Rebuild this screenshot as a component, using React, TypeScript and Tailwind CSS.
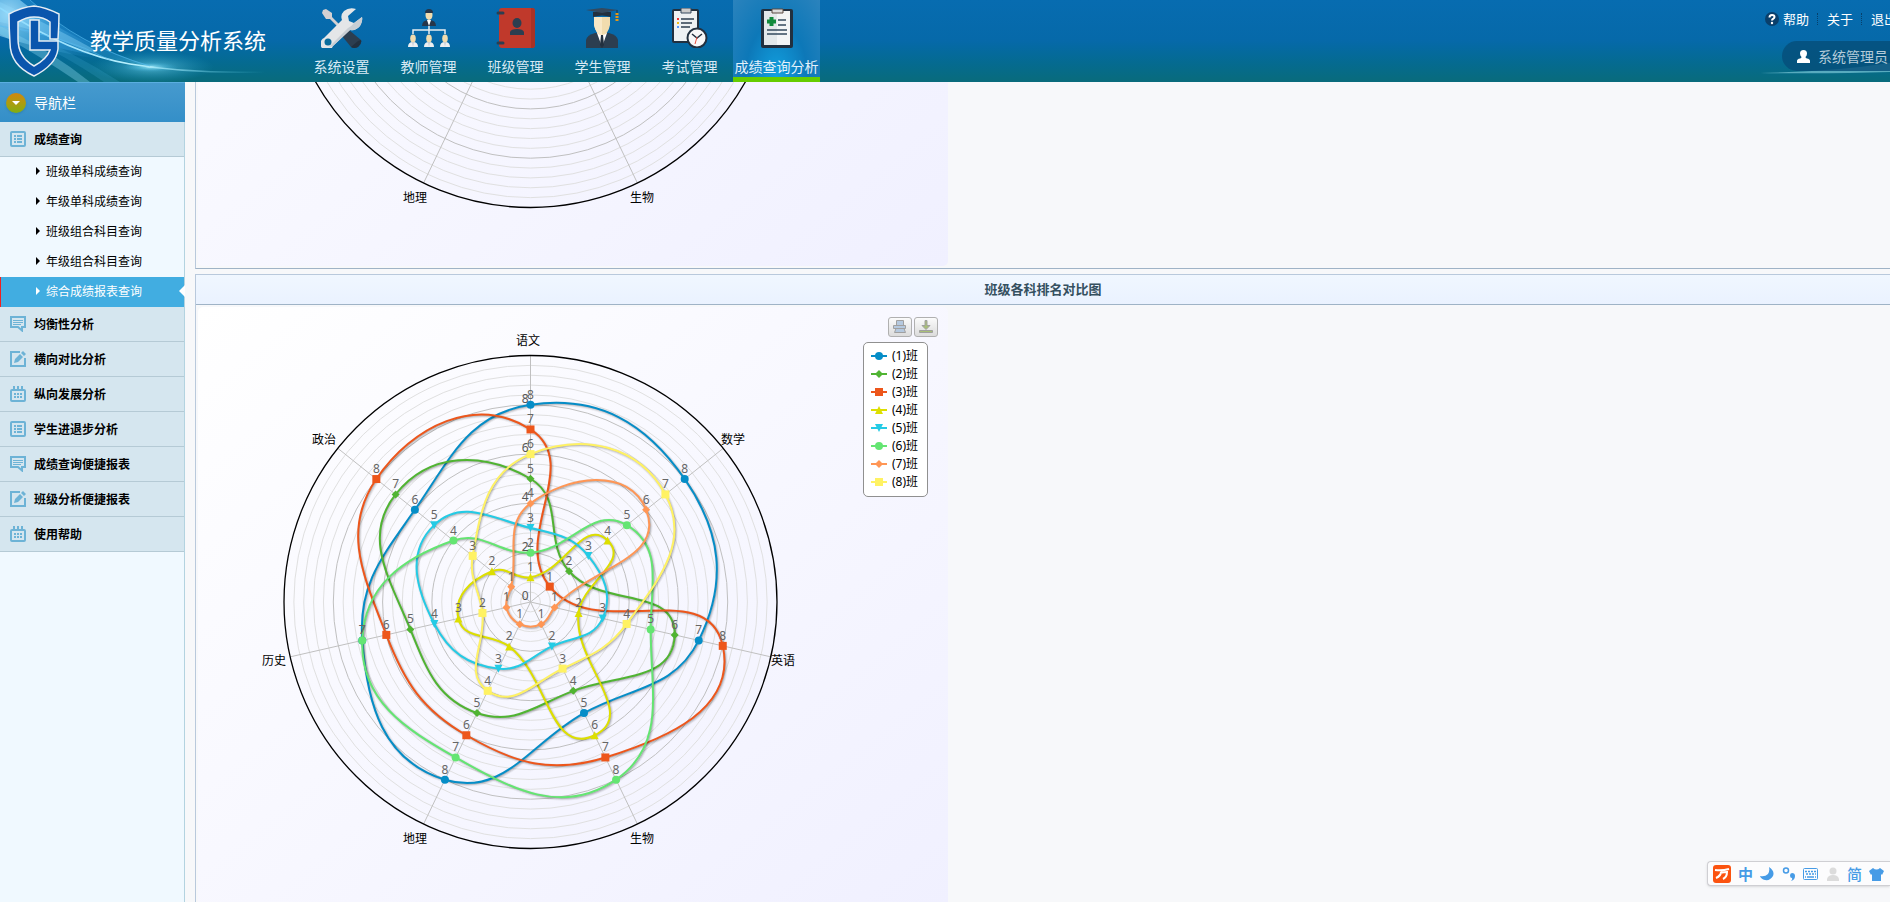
import type { ReactNode } from 'react'

interface Series {
  name: string
  color: string
  symbol: SymbolName
  ranks: number[]
}

type SymbolName = 'circle' | 'diamond' | 'square' | 'triangle' | 'triangle-down'

type Point = { x: number; y: number }

const CX = 332.5
const CY = 295
const UNIT = 24.65
const RADIUS = 246.5

const series: Series[] = [
  { name: '(1)班', color: '#058DC7', symbol: 'circle', ranks: [8, 8, 7, 5, 8, 7, 6] },
  { name: '(2)班', color: '#50B432', symbol: 'diamond', ranks: [5, 2, 6, 4, 5, 5, 7] },
  { name: '(3)班', color: '#ED561B', symbol: 'square', ranks: [7, 1, 8, 7, 6, 6, 8] },
  { name: '(4)班', color: '#DDDF00', symbol: 'triangle', ranks: [1, 4, 2, 6, 2, 3, 2] },
  { name: '(5)班', color: '#24CBE5', symbol: 'triangle-down', ranks: [3, 3, 3, 2, 3, 4, 5] },
  { name: '(6)班', color: '#64E572', symbol: 'circle', ranks: [2, 5, 5, 8, 7, 7, 4] },
  { name: '(7)班', color: '#FF9655', symbol: 'diamond', ranks: [4, 6, 1, 1, 1, 1, 1] },
  { name: '(8)班', color: '#FFF263', symbol: 'square', ranks: [6, 7, 4, 3, 4, 2, 3] },
]

const subjects = [
  { label: '语文', x: 318, y: 38 },
  { label: '数学', x: 523, y: 137 },
  { label: '英语', x: 573, y: 358 },
  { label: '生物', x: 432, y: 536 },
  { label: '地理', x: 205, y: 536 },
  { label: '历史', x: 64, y: 358 },
  { label: '政治', x: 114, y: 137 },
]

function polar(index: number, r: number): Point {
  const a = (index * 2 * Math.PI) / subjects.length - Math.PI / 2
  return { x: CX + Math.cos(a) * r, y: CY + Math.sin(a) * r }
}

// Closed smooth curve: both control points of a joint sit on one tangent line
function splinePath(points: Point[]) {
  const n = points.length
  const controls = points.map((p, i) => {
    const prev = points[(i + n - 1) % n]
    const next = points[(i + 1) % n]
    const dLeft = Math.hypot(prev.x - p.x, prev.y - p.y) / 2.5
    const dRight = Math.hypot(next.x - p.x, next.y - p.y) / 2.5
    const left = Math.atan2(prev.y - p.y, prev.x - p.x)
    const right = Math.atan2(next.y - p.y, next.x - p.x)
    let joint = Math.PI / 2 + (left + right) / 2
    if (Math.abs(left - joint) > Math.PI / 2) joint -= Math.PI
    return {
      left: { x: p.x + Math.cos(joint) * dLeft, y: p.y + Math.sin(joint) * dLeft },
      right: { x: p.x - Math.cos(joint) * dRight, y: p.y - Math.sin(joint) * dRight },
    }
  })
  let d = `M ${points[0].x} ${points[0].y}`
  for (let i = 1; i <= n; i++) {
    const a = controls[i - 1].right
    const b = controls[i % n].left
    const p = points[i % n]
    d += ` C ${a.x} ${a.y} ${b.x} ${b.y} ${p.x} ${p.y}`
  }
  return d
}

function symbolPath(symbol: SymbolName, x: number, y: number) {
  switch (symbol) {
    case 'circle':
      return `M${x - 4} ${y}a4 4 0 1 0 8 0a4 4 0 1 0 -8 0Z`
    case 'diamond':
      return `M${x} ${y - 4}l4 4l-4 4l-4 -4Z`
    case 'square':
      return `M${x - 4} ${y - 4}h8v8h-8Z`
    case 'triangle':
      return `M${x} ${y - 4}l4 8h-8Z`
    case 'triangle-down':
      return `M${x - 4} ${y - 4}h8l-4 8Z`
  }
}

interface PolarChartProps {
  id: string
  data: Series[]
  // first row of the 600px high drawing that is shown
  top?: number
}

function PolarChart({ id, data, top = 0 }: PolarChartProps) {
  return (
    <svg
      width="750"
      height={600 - top}
      viewBox={`0 ${top} 750 ${600 - top}`}
      className="block shrink-0 font-['Noto_Sans','Noto_Sans_CJK_SC',sans-serif] text-[12px]"
    >
      <defs>
        <linearGradient id={id} x1="0" y1="0" x2="1" y2="1">
          <stop offset="0" stopColor="#ffffff" />
          <stop offset="1" stopColor="#f0f0ff" />
        </linearGradient>
      </defs>
      <rect width="750" height="600" rx="5" fill={`url(#${id})`} />
      <g fill="none">
        {Array.from({ length: 24 }, (_, i) => i + 1).map((i) => (
          <circle
            key={i}
            cx={CX}
            cy={CY}
            r={i * 0.4 * UNIT}
            stroke={i % 5 === 0 ? '#c0c0c0' : '#e0e0e0'}
          />
        ))}
        {subjects.map((s, i) => {
          const end = polar(i, RADIUS)
          return <line key={s.label} x1={CX} y1={CY} x2={end.x} y2={end.y} stroke="#c0c0c0" />
        })}
        <circle cx={CX} cy={CY} r={RADIUS} stroke="#000" strokeWidth="1.3" />
      </g>
      {data.map((s) => {
        const points = s.ranks.map((rank, i) => polar(i, rank * UNIT))
        const d = splinePath(points)
        return (
          <g key={s.name}>
            <g fill="none" stroke="#000" transform="translate(1 1)">
              <path d={d} strokeWidth="5" strokeOpacity="0.05" />
              <path d={d} strokeWidth="3" strokeOpacity="0.1" />
              <path d={d} strokeWidth="1" strokeOpacity="0.15" />
            </g>
            <path d={d} fill="none" stroke={s.color} strokeWidth="2" />
            {points.map((p, i) => (
              <path key={i} d={symbolPath(s.symbol, p.x, p.y)} fill={s.color} />
            ))}
          </g>
        )
      })}
      <g fill="#000" className="font-['Noto_Sans_CJK_SC',sans-serif]">
        {subjects
          .filter((s) => s.y > top)
          .map((s) => (
            <text key={s.label} x={s.x} y={s.y}>
              {s.label}
            </text>
          ))}
      </g>
      <g fill="#555">
        {data.length > 0 &&
          [0, 2, 4, 6, 8].map((v) => (
            <text key={v} x={CX - 2} y={CY - 2 - v * UNIT} textAnchor="end">
              {v}
            </text>
          ))}
      </g>
      <g fill="#666" textAnchor="middle">
        {data.map((s) =>
          s.ranks.map((rank, i) => {
            const p = polar(i, rank * UNIT)
            return (
              <text key={`${s.name}-${i}`} x={p.x} y={p.y - 6}>
                {rank}
              </text>
            )
          }),
        )}
      </g>
    </svg>
  )
}

function Legend() {
  return (
    <ul className="rounded-[5px] border border-[#909090] bg-white pt-1 pr-[9px] pb-[5px] pl-[7px] font-['Noto_Sans','Noto_Sans_CJK_SC',sans-serif] text-[12px] text-black">
      {series.map((s) => (
        <li key={s.name} className="flex h-[18px] items-center gap-[5px] whitespace-nowrap leading-[18px]">
          <svg width="16" height="10" viewBox="0 0 16 10">
            <path d="M0 5H16" stroke={s.color} strokeWidth="2" />
            <path d={symbolPath(s.symbol, 8, 5)} fill={s.color} />
          </svg>
          {s.name}
        </li>
      ))}
    </ul>
  )
}

function ExportButtons() {
  const style =
    'flex h-5 w-6 items-center justify-center rounded-[3px] border border-[#b0b0b0] bg-linear-to-b from-[#fbfbfb] to-[#dcdcdc]'
  return (
    <div className="flex gap-[2px]">
      <button type="button" aria-label="打印图表" className={style}>
        <svg width="14" height="14" viewBox="0 0 14 14" fill="#b5c9df" stroke="#a0a0a0">
          <path d="M3.5 .5h7v5h-7zM.5 5.500h12v3h-12zM3 8.500h8l1.500 4h-11z" />
        </svg>
      </button>
      <button type="button" aria-label="导出图表" className={style}>
        <svg width="14" height="14" viewBox="0 0 14 14" fill="#a8bf77" stroke="#a0a0a0">
          <path d="M6 .5h2v5h3l-4 4l-4 -4h3zM.5 10.500h13v2h-13z" />
        </svg>
      </button>
    </div>
  )
}

function ToolsIcon() {
  return (
    <svg width="42" height="40" viewBox="0 0 42 40">
      <path d="M2 2l3-1 6 4 0 4 11 11-2 2L9 11l-4 0-4-6z" fill="#d3d0d2" />
      <path d="M28 22l12 10q1 4-3 7-4 2-7 0L21 28z" fill="#2c3e50" />
      <path d="M37 33l3-1q1 4-3 7-4 2-7 0z" fill="#22303f" />
      <path d="M35 1q-7-2-12 2-4 4-2 9L3 30a6.500 6.500 0 1 0 9 8L29 22q6 1 10-4 3-5 2-9l-8 6-5-2-1-5z" fill="#e4e6e8" />
      <path d="M12 38L29 22q6 1 10-4 3-5 2-9l-8 6q-3 4-6 5L8 39z" fill="#c8ced4" />
      <circle cx="7" cy="34" r="3.500" fill="#096c9c" />
    </svg>
  )
}

function Person({ x, y }: { x: number; y: number }) {
  return (
    <g transform={`translate(${x} ${y})`}>
      <path d="M0 13q0-5 5-5t5 5z" fill="#eceff2" />
      <ellipse cx="5" cy="4.500" rx="2.800" ry="4" fill="#f1dcae" />
      <path d="M4 8h2l-1 5z" fill="#c8ced4" />
    </g>
  )
}

function TeachersIcon() {
  return (
    <svg width="44" height="40" viewBox="0 0 44 40">
      <path d="M6 26v-4h32v4M22 18v8" fill="none" stroke="#e8eef2" strokeWidth="1.500" />
      <path d="M15 18q0-6 7-6t7 6z" fill="#26364a" />
      <path d="M20 12h4l-2 6z" fill="#fff" />
      <ellipse cx="22" cy="7" rx="3.500" ry="5" fill="#f1dcae" />
      <path d="M18 5q0-4 4-4t4 4z" fill="#26364a" />
      <Person x={1} y={26} />
      <Person x={17} y={26} />
      <Person x={33} y={26} />
    </svg>
  )
}

function ClassIcon() {
  return (
    <svg width="40" height="40" viewBox="0 0 40 40">
      <rect x="3" width="36" height="40" rx="3" fill="#c0392b" />
      <path d="M35 0h1q3 0 3 3v34q0 3-3 3h-1z" fill="#a93226" />
      <path d="M2 5h5M2 35h5" stroke="#2c3e50" strokeWidth="3" strokeLinecap="round" />
      <ellipse cx="21" cy="15" rx="4.500" ry="5" fill="#2c3e50" />
      <path d="M14 27v-3q1-3 7-3t7 3v3z" fill="#2c3e50" />
    </svg>
  )
}

function StudentIcon() {
  return (
    <svg width="40" height="40" viewBox="0 0 40 40">
      <path d="M3 40v-8q1-5 9-7h14q8 2 9 7v8z" fill="#2c3e50" />
      <path d="M14 25h10l-5 14z" fill="#fff" />
      <path d="M18 27h2l1 10-2 3-2-3z" fill="#22303f" />
      <path d="M11 9h16v8q-2 10-8 10t-8-10z" fill="#f1dcae" />
      <path d="M11 9h8v18q-6 0-8-10z" fill="#f8e8c6" />
      <path d="M10 4h18v5q-9-3-18 0z" fill="#22303f" />
      <path d="M3 2l16-2 16 2-16 3z" fill="#34495e" />
      <path d="M34 2v5" stroke="#22303f" />
      <path d="M34 5v9" stroke="#e59613" strokeWidth="3" strokeDasharray="2 1" />
    </svg>
  )
}

function ExamIcon() {
  return (
    <svg width="40" height="40" viewBox="0 0 40 40">
      <rect x="2" y="1" width="27" height="34" rx="2" fill="#22303f" />
      <rect x="4" y="3" width="23" height="30" fill="#eef1f3" />
      <path d="M11 0h10v5H11z" fill="#ccc" stroke="#34495e" />
      <path d="M11 11h13M11 15h11M11 19h9" stroke="#2c3e50" strokeWidth="1.500" />
      <path d="M7 11h2" stroke="#e33" strokeWidth="2" />
      <path d="M7 15h2" stroke="#eebb19" strokeWidth="2" />
      <path d="M7 19h2" stroke="#59f" strokeWidth="2" />
      <circle cx="27" cy="30" r="9.500" fill="#f8f8f8" stroke="#22303f" strokeWidth="2" />
      <path d="M22 26l5 4 5-4" fill="none" stroke="#22303f" strokeWidth="1.500" />
      <path d="M27 29l-2 7" stroke="#e74c3c" />
    </svg>
  )
}

function ReportIcon() {
  return (
    <svg width="40" height="40" viewBox="0 0 40 40">
      <rect x="4" y="1" width="32" height="39" rx="2" fill="#22303f" />
      <rect x="7" y="3" width="26" height="34" fill="#f3f5f6" />
      <path d="M7 3h13v34H7z" fill="#e3e8ea" />
      <path d="M15 1h11v4H15z" fill="#ddd" stroke="#5a4a42" />
      <path d="M14.500 9v9M10 13.500h9" stroke="#118a3c" strokeWidth="4" />
      <path d="M21 12h8M21 17h8M10 22h20M10 26h20" stroke="#34495e" strokeWidth="1.500" />
    </svg>
  )
}

const modules: { label: string; icon: ReactNode }[] = [
  { label: '系统设置', icon: <ToolsIcon /> },
  { label: '教师管理', icon: <TeachersIcon /> },
  { label: '班级管理', icon: <ClassIcon /> },
  { label: '学生管理', icon: <StudentIcon /> },
  { label: '考试管理', icon: <ExamIcon /> },
  { label: '成绩查询分析', icon: <ReportIcon /> },
]

function HeaderArt() {
  return (
    <svg className="absolute top-0 left-0" width="300" height="82" viewBox="0 0 300 82" aria-hidden="true">
      <defs>
        <radialGradient id="flare">
          <stop offset="0" stopColor="#d8fbff" />
          <stop offset="0.200" stopColor="#6fd0ea" stopOpacity="0.700" />
          <stop offset="1" stopColor="#2aa0d0" stopOpacity="0" />
        </radialGradient>
        <linearGradient id="streak" x1="0" y1="0" x2="1" y2="0">
          <stop offset="0" stopColor="#8fdcff" stopOpacity="0.900" />
          <stop offset="0.500" stopColor="#b9f2ff" />
          <stop offset="1" stopColor="#4ac0dc" stopOpacity="0" />
        </linearGradient>
        <radialGradient id="corner" gradientUnits="userSpaceOnUse" cx="8" cy="14" r="100">
          <stop offset="0" stopColor="#c8f0ff" stopOpacity="0.900" />
          <stop offset="0.400" stopColor="#5cb8ea" stopOpacity="0.500" />
          <stop offset="1" stopColor="#2a94d0" stopOpacity="0" />
        </radialGradient>
      </defs>
      <path d="M0 0H20Q70 42 150 66Q60 56 0 36Z" fill="url(#corner)" />
      <path d="M0 0H30Q70 40 150 66Q60 50 0 34Z" fill="#46b4ee" opacity="0.250" />
      <path d="M0 2Q60 30 95 50L88 52Q40 30 0 22Z" fill="#8bd8fb" opacity="0.400" />
      <path d="M0 26Q50 50 90 82H78Q40 56 0 34Z" fill="#7fd0e8" opacity="0.400" />
      <path d="M20 30Q70 50 120 82H104Q60 52 20 36Z" fill="#3aa5cb" opacity="0.250" />
      <ellipse cx="152" cy="67" rx="62" ry="16" fill="url(#flare)" opacity="0.700" />
      <ellipse cx="150" cy="67" rx="28" ry="5" fill="url(#flare)" />
      <path d="M0 8Q70 54 130 64T265 72" fill="none" stroke="url(#streak)" strokeWidth="1.500" />
      <path d="M30 0Q80 46 150 66" fill="none" stroke="#58bdf0" strokeOpacity="0.600" />
      <path d="M0 26Q60 34 110 60" fill="none" stroke="#58bdf0" strokeOpacity="0.600" />
    </svg>
  )
}

function Logo() {
  return (
    <svg width="52" height="72" viewBox="0 0 52 72" aria-hidden="true">
      <path
        d="M26 1Q37 2 51 9Q51 20 50 34H42V17Q36 12 26 12Q18 12 10 17V34Q10 52 26 61Q39 54 42 45H22V15H31V36H50V44Q48 60 26 71Q2 60 2 38Q1 22 1 9Q14 2 26 1Z"
        fill="#0a55ad"
        stroke="#e6edf4"
        strokeWidth="1.500"
      />
    </svg>
  )
}

function Header() {
  return (
    <header className="relative flex h-[82px] shrink-0 overflow-hidden bg-linear-to-b from-[#076cb0] from-0% via-[#0669a9] via-50% to-[#096b7b] to-100%">
      <HeaderArt />
      <svg className="absolute right-0 bottom-0" width="150" height="20" viewBox="0 0 150 20" aria-hidden="true">
        <path d="M20 11Q90 10 150 1V10Q90 12 20 11Z" fill="#8fd6e4" opacity="0.600" />
      </svg>
      <div className="relative flex w-[298px] shrink-0 items-start pt-[5px] pl-2">
        <Logo />
        <h1 className="mt-[18px] ml-[30px] text-[22px] leading-8 whitespace-nowrap text-white">教学质量分析系统</h1>
      </div>
      <nav className="relative flex">
        {modules.map((m, i) => {
          const active = i === modules.length - 1
          return (
            <a
              key={m.label}
              href="#"
              className={`flex w-[87px] flex-col items-center pt-2 text-[14px] whitespace-nowrap ${
                active
                  ? 'border-b-[5px] border-[#66cc00] bg-[radial-gradient(ellipse_at_50%_100%,#12a1e0_0%,#0d78b8_50%,#2b83bd_100%)] text-[#e4f2fb]'
                  : 'text-[#d9eaf5]'
              }`}
            >
              {m.icon}
              <span className="mt-2 leading-5">{m.label}</span>
            </a>
          )
        })}
      </nav>
      <div className="relative ml-auto w-[125px] shrink-0 whitespace-nowrap text-white">
        <div className="flex h-[37px] items-center text-[13px]">
          <svg width="14" height="14" viewBox="0 0 14 14" className="mr-1 shrink-0">
            <circle cx="7" cy="7" r="7" fill="#093f6b" />
            <path d="M4.500 5.500q0-2.500 2.500-2.500t2.500 2q0 1-1.500 2-1 .5-1 1.500" fill="none" stroke="#fff" strokeWidth="2" />
            <circle cx="7" cy="11" r="1.200" fill="#fff" />
          </svg>
          <a href="#">帮助</a>
          <span className="mr-[9px] ml-2 h-3 border-l border-dotted border-[#06406b]" />
          <a href="#">关于</a>
          <span className="mr-[9px] ml-2 h-3 border-l border-dotted border-[#06406b]" />
          <a href="#">退出</a>
        </div>
        <div className="mt-1 ml-[17px] flex h-[30px] items-center gap-2 rounded-l-full bg-[#054d79]/80 pl-[15px] text-[14px] text-[#b3cbd9]">
          <svg width="13" height="13" viewBox="0 0 13 13" fill="#fff" className="shrink-0">
            <path d="M6.500 0q3.500 0 3.500 3.500 0 2-1.500 3.500 0 1 1.500 1.500 3 .5 3 2.500v2H0v-2q0-2 3-2.500Q4.500 8 4.500 7 3 5.500 3 3.500 3 0 6.500 0Z" />
          </svg>
          系统管理员
        </div>
      </div>
    </header>
  )
}

type MenuIconName = 'list' | 'comment' | 'edit' | 'calendar'

const menuIconPaths: Record<MenuIconName, ReactNode> = {
  list: (
    <>
      <rect x="1" y="1" width="14" height="14" rx="1" fill="none" strokeWidth="2" />
      <path d="M4 5h2M4 8h2M4 11h2M7 5h5M7 8h5M7 11h5" strokeWidth="2" />
    </>
  ),
  comment: (
    <>
      <path d="M1 1h14v10h-3v3.500l-4-3.500H1z" fill="none" strokeWidth="2" />
      <path d="M3 4.500h10M3 6.500h10M3 8.500h8" />
    </>
  ),
  edit: (
    <>
      <path d="M10 1H1v14h14V7" fill="none" strokeWidth="2" />
      <path d="M4 12l1-4 5-5 3 3-5 5zM11 2l2-2 3 3-2 2z" fill="#6db3d6" stroke="none" />
    </>
  ),
  calendar: (
    <>
      <rect x="1" y="4" width="14" height="11" rx="1" fill="none" strokeWidth="2" />
      <path d="M4 0v3M8 0v3M12 0v3" strokeWidth="2" />
      <path d="M4 8h2M7 8h2M10 8h2M4 11h2M7 11h2M10 11h2" strokeWidth="2" />
    </>
  ),
}

const menuTail: { label: string; icon: MenuIconName }[] = [
  { label: '均衡性分析', icon: 'comment' },
  { label: '横向对比分析', icon: 'edit' },
  { label: '纵向发展分析', icon: 'calendar' },
  { label: '学生进退步分析', icon: 'list' },
  { label: '成绩查询便捷报表', icon: 'comment' },
  { label: '班级分析便捷报表', icon: 'edit' },
  { label: '使用帮助', icon: 'calendar' },
]

const queries = ['班级单科成绩查询', '年级单科成绩查询', '班级组合科目查询', '年级组合科目查询', '综合成绩报表查询']

function MenuRow({ label, icon }: { label: string; icon: MenuIconName }) {
  return (
    <a
      href="#"
      className="flex h-[35px] items-center gap-2 border-b border-[#b5cad5] bg-[#d5e6ef] pl-[10px] text-[12px] font-bold text-black"
    >
      <svg width="16" height="16" viewBox="0 0 16 16" stroke="#6db3d6">
        {menuIconPaths[icon]}
      </svg>
      {label}
    </a>
  )
}

function Sidebar() {
  return (
    <aside className="w-[185px] shrink-0 border-r border-[#b3d3e0] bg-[#f0f9ff]">
      <div className="-mr-px flex h-10 items-center gap-2 border-t border-[#5aaee0] bg-linear-to-b from-[#469ace] to-[#348fc8] pl-[6px] text-[14px] text-white">
        <span className="flex size-5 items-center justify-center rounded-full bg-linear-to-b from-[#d0860e] to-[#7fae10] shadow-sm">
          <svg width="8" height="4" viewBox="0 0 8 4" fill="#fff">
            <path d="M0 0h8l-4 4z" />
          </svg>
        </span>
        导航栏
      </div>
      <MenuRow label="成绩查询" icon="list" />
      <ul>
        {queries.map((q, i) => {
          const active = i === queries.length - 1
          return (
            <li key={q}>
              <a
                href="#"
                className={`flex h-[30px] items-center border-l pb-[2px] pl-[35px] text-[12px] ${
                  active ? 'border-[#f02020] bg-[#41ade1] text-white' : 'border-transparent text-black'
                }`}
              >
                <svg width="4" height="8" viewBox="0 0 4 8" fill="currentColor" className="mr-[6px]">
                  <path d="M0 0l4 4l-4 4z" />
                </svg>
                {q}
                {active && (
                  <svg width="6" height="12" viewBox="0 0 6 12" fill="#fff" className="-mr-px ml-auto">
                    <path d="M6 0v12L0 6z" />
                  </svg>
                )}
              </a>
            </li>
          )
        })}
      </ul>
      {menuTail.map((m) => (
        <MenuRow key={m.label} label={m.label} icon={m.icon} />
      ))}
    </aside>
  )
}

function InputMethodBar() {
  return (
    <div className="absolute right-0 bottom-4 flex h-[25px] w-[183px] items-center rounded-l-[4px] border border-r-0 border-[#cfcfd3] bg-[#fcfcfd] pl-[5px] text-[#469be6] shadow-sm">
      <svg width="18" height="18" viewBox="0 0 18 18" fill="none" stroke="#fff" strokeWidth="2">
        <rect width="18" height="18" rx="3" fill="#fb5310" stroke="none" />
        <path d="M2 5q7 1 14-1M9 5q-1 6-6 8M7 8q4-1 7-1 0 5-4 7" />
      </svg>
      <span className="ml-[7px] w-4 text-[15px] leading-5 font-bold">中</span>
      <svg width="14" height="14" viewBox="0 0 14 14" fill="currentColor" className="ml-[6px]">
        <path d="M9 0q6 4 4 9-3 5-8 4-4-1-5-4 5 1 8-2 2-3 1-7z" />
      </svg>
      <svg width="14" height="14" viewBox="0 0 14 14" className="ml-2">
        <circle cx="4" cy="3.500" r="2.500" fill="none" stroke="currentColor" strokeWidth="1.500" />
        <path d="M10 6q3 0 3 3 0 4-4 5 2-2 1-3-2 0-2-2.500Q8 6 10 6z" fill="currentColor" />
      </svg>
      <svg width="15" height="12" viewBox="0 0 15 12" className="ml-[7px]" fill="none" stroke="currentColor">
        <rect x="0.500" y="0.500" width="14" height="11" rx="1" />
        <path d="M2 3.500h11M3 6h10" strokeWidth="1.500" strokeDasharray="2 1" />
        <path d="M2 9h1M4 9h7M12 9h1" strokeWidth="1.500" />
      </svg>
      <svg width="12" height="14" viewBox="0 0 12 14" className="ml-[9px]" fill="#dcdcdc">
        <circle cx="6" cy="4" r="3.500" />
        <path d="M0 14v-2q1-4 6-4t6 4v2z" />
      </svg>
      <span className="ml-2 w-4 text-[15px] leading-5 font-medium">简</span>
      <svg width="15" height="14" viewBox="0 0 15 14" className="ml-[6px] shrink-0" fill="currentColor">
        <path d="M4 1q3.500 3 7 0l4 3-2 4-1-1v7H3V7L2 8 0 4z" />
      </svg>
    </div>
  )
}

export default function App() {
  return (
    <div className="relative flex h-screen flex-col overflow-hidden bg-[#f7f8fa] font-['Noto_Sans_CJK_SC',sans-serif]">
      <Header />
      <div className="flex min-h-0 flex-1">
        <Sidebar />
        <main className="-mr-px ml-[10px] flex min-w-0 flex-1 flex-col gap-[5px]">
          <section className="shrink-0 border-x border-b border-[#9fb3c6] border-l-[#b9c9dc] pb-[2px] pl-[2px]">
            <PolarChart id="paper-upper" data={[]} top={416} />
          </section>
          <section className="min-h-0 flex-1 overflow-hidden border-x border-t border-[#b9c9dc]">
            <h2 className="flex h-[30px] items-center justify-center border-b border-[#9fb3c6] bg-linear-to-b from-[#f0f7ff] to-[#eaf2ff] pb-[2px] text-[13px] font-bold text-[#35505f]">
              班级各科排名对比图
            </h2>
            <div className="relative w-[752px] pt-[2px] pl-[2px]">
              <PolarChart id="paper-lower" data={series} />
              <div className="absolute top-3 right-[10px] flex flex-col items-end gap-[5px]">
                <ExportButtons />
                <div className="mr-[10px]">
                  <Legend />
                </div>
              </div>
            </div>
          </section>
        </main>
      </div>
      <InputMethodBar />
    </div>
  )
}
